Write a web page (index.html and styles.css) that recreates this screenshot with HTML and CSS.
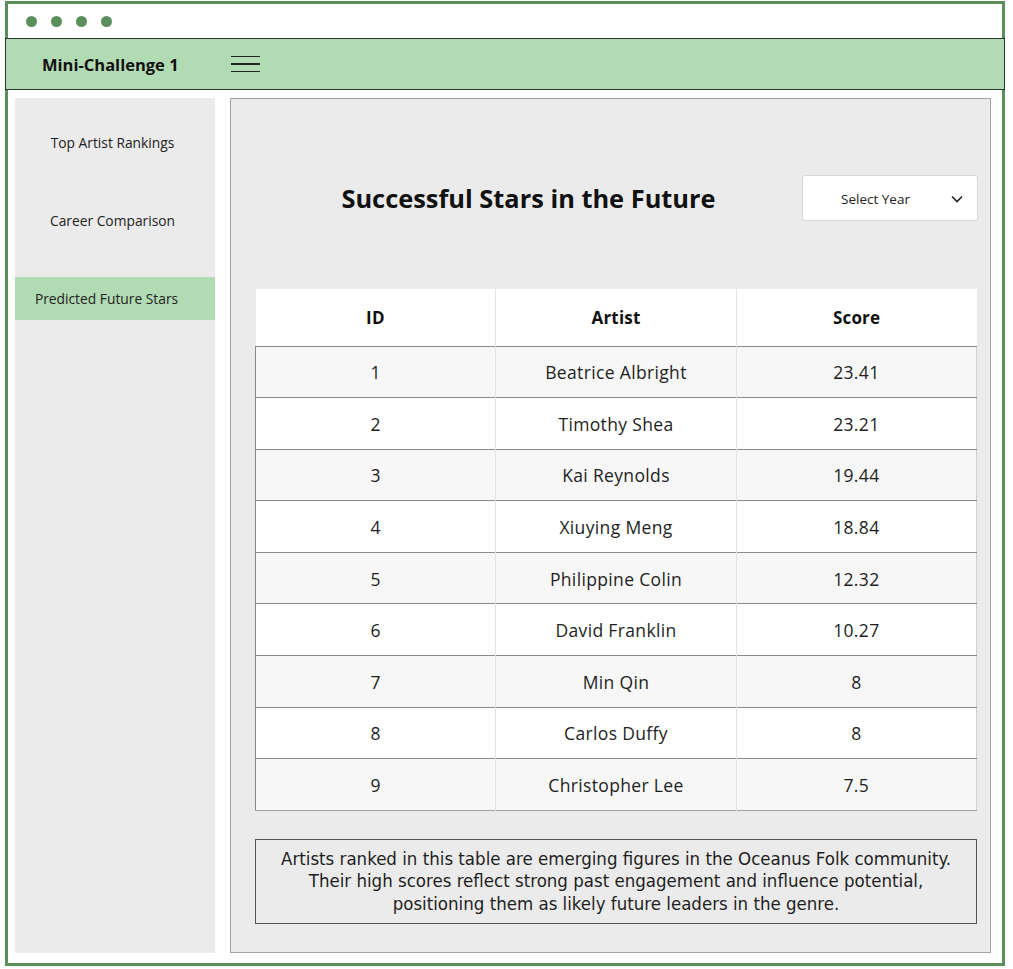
FILE: index.html
```html
<!DOCTYPE html>
<html lang="en">
<head>
<meta charset="utf-8">
<title>Mini-Challenge 1</title>
<link rel="stylesheet" href="styles.css">
</head>
<body>
<div class="frame">
  <div class="topbar">
    <span class="dot"></span><span class="dot"></span><span class="dot"></span><span class="dot"></span>
  </div>
  <header class="header">
    <div class="brand">Mini-Challenge 1</div>
    <div class="burger"><span></span><span></span><span></span></div>
  </header>
  <div class="body">
    <nav class="sidebar">
      <div class="nav-item">Top Artist Rankings</div>
      <div class="nav-item">Career Comparison</div>
      <div class="nav-item active">Predicted Future Stars</div>
    </nav>
    <main class="panel">
      <div class="title-row">
        <h1 class="title">Successful Stars in the Future</h1>
        <div class="select">
          <span>Select Year</span>
          <svg class="chev" width="12" height="8" viewBox="0 0 12 8"><path d="M1 1.5 L6 6.5 L11 1.5" fill="none" stroke="#222" stroke-width="1.6"/></svg>
        </div>
      </div>
      <table class="stars">
        <thead>
          <tr><th>ID</th><th>Artist</th><th>Score</th></tr>
        </thead>
        <tbody>
          <tr><td>1</td><td>Beatrice Albright</td><td>23.41</td></tr>
          <tr><td>2</td><td>Timothy Shea</td><td>23.21</td></tr>
          <tr><td>3</td><td>Kai Reynolds</td><td>19.44</td></tr>
          <tr><td>4</td><td>Xiuying Meng</td><td>18.84</td></tr>
          <tr><td>5</td><td>Philippine Colin</td><td>12.32</td></tr>
          <tr><td>6</td><td>David Franklin</td><td>10.27</td></tr>
          <tr><td>7</td><td>Min Qin</td><td>8</td></tr>
          <tr><td>8</td><td>Carlos Duffy</td><td>8</td></tr>
          <tr><td>9</td><td>Christopher Lee</td><td>7.5</td></tr>
        </tbody>
      </table>
      <p class="caption">Artists ranked in this table are emerging figures in the Oceanus Folk community.<br>Their high scores reflect strong past engagement and influence potential,<br>positioning them as likely future leaders in the genre.</p>
    </main>
  </div>
</div>
</body>
</html>
```

FILE: styles.css
```css
* { box-sizing: border-box; }
html, body { margin: 0; padding: 0; background: #fff; }
body { font-family: "Open Sans", "Noto Sans", sans-serif; color: #1e1e1e; }

.frame {
  margin: 1px 0 0 5px;
  width: 1000px;
  height: 965px;
  border: 3px solid #5b8f5b;
  display: flex;
  flex-direction: column;
}

.topbar {
  height: 34px;
  display: flex;
  align-items: center;
  gap: 14px;
  padding-left: 18px;
}
.dot {
  width: 11px;
  height: 11px;
  border-radius: 50%;
  background: #5b8f5b;
}

.header {
  margin: 0 -3px;
  height: 52px;
  background: #b1dbb3;
  border: 1.5px solid #27372a;
  display: flex;
  align-items: center;
  padding-left: 36px;
}
.brand {
  font-weight: 700;
  font-size: 16.5px;
  width: 189px;
  color: #111;
}
.burger {
  width: 29px;
  display: flex;
  flex-direction: column;
  gap: 6px;
}
.burger span {
  display: block;
  height: 1.5px;
  background: #222;
}

.body {
  flex: 1;
  display: flex;
  gap: 15px;
  padding: 8px 11px 10px 7px;
}

.sidebar {
  width: 200px;
  background: #ebebeb;
  display: flex;
  flex-direction: column;
  gap: 35px;
  padding-top: 23px;
}
.nav-item {
  height: 43px;
  display: flex;
  align-items: center;
  justify-content: center;
  font-size: 13.8px;
  color: #222;
  padding-right: 5px;
}
.nav-item.active {
  background: #b1dbb3;
  padding-right: 17px;
}

.panel {
  flex: 1;
  background: #ebebeb;
  border: 1px solid #a3a3a3;
  padding: 76px 12px 0 24px;
}

.title-row {
  display: flex;
  align-items: center;
  height: 46px;
}
.title {
  flex: 1;
  margin: 0;
  text-align: center;
  font-size: 25.4px;
  font-weight: 700;
  color: #111;
}
.select {
  width: 176px;
  height: 46px;
  background: #fff;
  border: 1px solid #d8d8d8;
  border-radius: 3px;
  display: flex;
  align-items: center;
  justify-content: space-between;
  padding: 2px 14px 0 38px;
  font-size: 13.5px;
  color: #222;
}

.stars {
  margin-top: 68px;
  width: 722px;
  border-collapse: collapse;
  table-layout: fixed;
  font-size: 17.5px;
  letter-spacing: 0.35px;
}
.stars th, .stars td {
  text-align: center;
  border-left: 1px solid #e2e2e2;
  color: #1e1e1e;
  padding-top: 2px;
}
.stars th:first-child, .stars td:first-child { border-left: none; }
.stars thead tr {
  background: #fff;
  height: 57px;
  border-bottom: 1px solid #8a8a8a;
}
.stars th { font-weight: 700; color: #111; font-size: 17px; letter-spacing: 0.2px; }
.stars tbody tr {
  height: 51.6px;
  border-bottom: 1px solid #8a8a8a;
  border-left: 1px solid #8a8a8a;
  border-right: 1px solid #d0d0d0;
  background: #fff;
}
.stars tbody tr:nth-child(odd) { background: #f7f7f7; }
.stars tbody tr:last-child { border-bottom-color: #a0a0a0; }

.caption {
  margin: 28px 0 0;
  width: 722px;
  height: 85px;
  border: 1px solid #555;
  display: flex;
  align-items: center;
  justify-content: center;
  text-align: center;
  font-family: "DejaVu Sans Condensed", "Roboto", sans-serif;
  font-size: 18.5px;
  line-height: 22.5px;
  color: #1e1e1e;
}
```
